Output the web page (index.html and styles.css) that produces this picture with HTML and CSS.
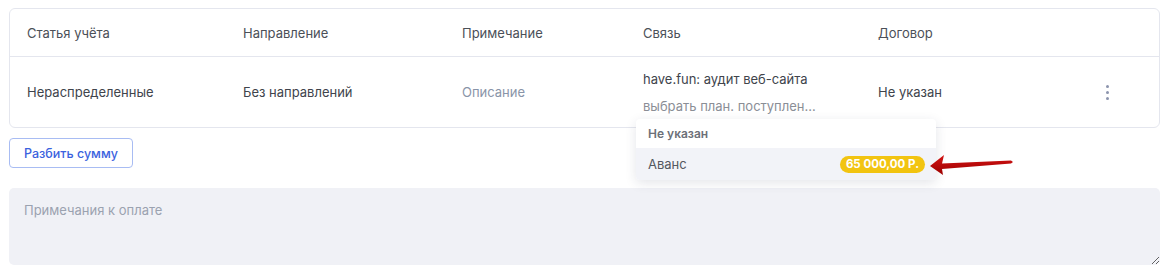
FILE: index.html
```html
<!DOCTYPE html>
<html>
<head>
    <meta charset="utf-8">
    <title>Статьи учёта</title>
    <link rel="stylesheet" href="styles.css">
</head>
<body>
    <div class="card">
        <div class="row head">
            <div class="cell">Статья учёта</div>
            <div class="cell">Направление</div>
            <div class="cell">Примечание</div>
            <div class="cell">Связь</div>
            <div class="cell">Договор</div>
            <div class="cell"></div>
        </div>
        <div class="row body">
            <div class="cell">Нераспределенные</div>
            <div class="cell">Без направлений</div>
            <div class="cell muted">Описание</div>
            <div class="cell link-cell">
                <div class="link-title">have.fun: аудит веб-сайта</div>
                <div class="link-select">выбрать план. поступлен...</div>

                <!-- открытый список планов -->
                <div class="dropdown">
                    <div class="dropdown-head">Не указан</div>
                    <div class="dropdown-item">
                        <span>Аванс</span>
                        <span class="badge">65 000,00 Р.</span>
                    </div>
                </div>
            </div>
            <div class="cell">Не указан</div>
            <div class="cell menu-cell">
                <span class="kebab"><i></i><i></i><i></i></span>
            </div>
        </div>
    </div>

    <button class="split-button">Разбить сумму</button>

    <textarea class="notes" placeholder="Примечания к оплате"></textarea>

    <svg class="arrow" width="100" height="30" viewBox="0 0 100 30">
        <defs>
            <linearGradient id="arrowFill" x1="0" y1="0" x2="0" y2="1">
                <stop offset="0" stop-color="#d41414"/>
                <stop offset="1" stop-color="#9c0000"/>
            </linearGradient>
        </defs>
        <path d="M1 13 L15 2 L13 10.5 L82 7.5 L84 9 L82 10.5 L13 16 L14 22 Z" fill="url(#arrowFill)"/>
    </svg>
</body>
</html>
```

FILE: styles.css
```css
body {
    margin: 8px 8px 0 9px;
    font-family: Inter, 'Noto Sans', sans-serif;
    font-size: 13px;
    color: #40444c;
    background: #fff;
    position: relative;
}

.card {
    border: 1px solid #e4e6ee;
    border-radius: 6px;
}

.row {
    display: grid;
    grid-template-columns: 216px 219px 181px 235px 1fr 88px;
    padding-left: 17px;
}

.head {
    height: 47px;
    align-items: center;
    border-bottom: 1px solid #e4e6ee;
    color: #4b5058;
}

.body {
    height: 70px;
    align-items: center;
}

.muted {
    color: #8994a8;
}

.link-cell {
    position: relative;
    align-self: stretch;
    display: flex;
    flex-direction: column;
    justify-content: center;
    gap: 11px;
    padding-top: 1px;
}

.link-select {
    color: #8a8e96;
    width: 175px;
    white-space: nowrap;
    overflow: hidden;
    text-overflow: ellipsis;
}

.dropdown {
    position: absolute;
    left: -7px;
    top: 62px;
    width: 300px;
    background: #fff;
    border-radius: 4px;
    box-shadow: 0 3px 12px rgba(30, 40, 70, 0.12);
    z-index: 2;
    overflow: hidden;
}

.dropdown-head {
    height: 29px;
    padding-left: 12px;
    display: flex;
    align-items: center;
    font-size: 12px;
    font-weight: 600;
    color: #6c7078;
}

.dropdown-item {
    height: 32px;
    padding: 0 11px 0 12px;
    display: flex;
    align-items: center;
    justify-content: space-between;
    background: #f2f3f8;
    color: #545860;
}

.badge {
    background: #f2c411;
    color: #fff;
    font-size: 11.5px;
    font-weight: 700;
    padding: 2px 6px;
    border-radius: 9px;
    line-height: 13px;
}

.menu-cell {
    display: flex;
    justify-content: flex-start;
    padding-left: 35px;
}

.kebab {
    display: flex;
    flex-direction: column;
    gap: 3px;
}

.kebab i {
    width: 3px;
    height: 3px;
    border-radius: 50%;
    background: #8c94ad;
}

.split-button {
    display: block;
    margin-top: 10px;
    height: 30px;
    padding: 0 14px;
    background: #fff;
    border: 1px solid #a8bcf3;
    border-radius: 4px;
    color: #3a62de;
    font-family: Inter, 'Noto Sans', sans-serif;
    font-size: 12.5px;
    font-weight: 500;
    cursor: pointer;
}

.notes {
    display: block;
    box-sizing: border-box;
    width: 1151px;
    height: 77px;
    margin-top: 20px;
    padding: 14px 15px;
    border: none;
    border-radius: 5px;
    background: #f0f1f6;
    font-family: Inter, 'Noto Sans', sans-serif;
    font-size: 13px;
    color: #333840;
    outline: none;
}

.notes::placeholder {
    color: #9ba2b0;
}

.arrow {
    position: absolute;
    left: 920px;
    top: 145px;
    z-index: 3;
}
```
